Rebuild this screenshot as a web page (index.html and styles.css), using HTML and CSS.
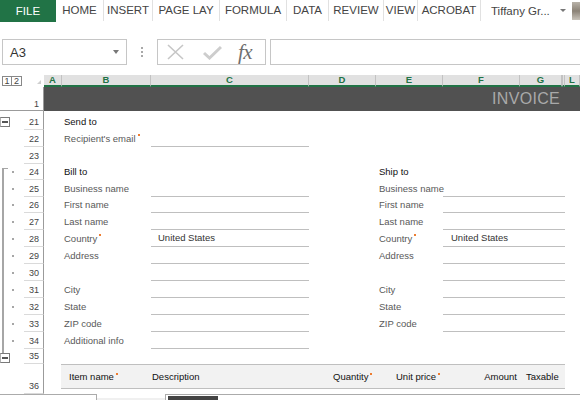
FILE: index.html
```html
<!DOCTYPE html>
<html>
<head>
    <meta charset="UTF-8">
    <link rel="stylesheet" href="styles.css">
</head>
<body>
    <div class="tabs">
        <div class="tab tab-file">FILE</div>
        <div class="tab w48">HOME</div>
        <div class="tab w49">INSERT</div>
        <div class="tab w67">PAGE LAY</div>
        <div class="tab w67">FORMULA</div>
        <div class="tab w42">DATA</div>
        <div class="tab w55">REVIEW</div>
        <div class="tab w34">VIEW</div>
        <div class="tab w63">ACROBAT</div>
        <div class="tab-user">
            <span>Tiffany Gr...</span>
            <span class="caret"></span>
            <span class="avatar"></span>
        </div>
    </div>

    <div class="fbar">
        <div class="namebox">
            <span>A3</span>
            <span class="caret"></span>
        </div>
        <div class="grip"><i></i><i></i><i></i></div>
        <div class="fbtns">
            <svg class="ico-x" width="17" height="16" viewBox="0 0 17 16">
                <path d="M1 1 L16 15 M16 1 L1 15" stroke="#c6c6c6" stroke-width="1.6" fill="none"/>
            </svg>
            <svg class="ico-ok" width="19" height="15" viewBox="0 0 19 15">
                <path d="M1 8 L6.5 13 L18 2" stroke="#cdcdcd" stroke-width="3" fill="none"/>
            </svg>
            <span class="fx">fx</span>
        </div>
        <div class="finput"></div>
    </div>

    <div class="sheet">
        <!-- column headers -->
        <div class="row colhdr">
            <div class="gutter levels"><span>1</span><span>2</span></div>
            <div class="corner"><span class="tri"></span></div>
            <div class="ch">A</div>
            <div class="ch">B</div>
            <div class="ch">C</div>
            <div class="ch">D</div>
            <div class="ch">E</div>
            <div class="ch">F</div>
            <div class="ch">G</div>
            <div class="ch hidden-col"></div>
            <div class="ch">L</div>
        </div>

        <div class="row r1">
            <div class="gutter"></div>
            <div class="rh">1</div>
            <div class="banner">INVOICE</div>
        </div>

        <div class="row h19">
            <div class="gutter"><span class="gut-box top6"><i></i></span></div>
            <div class="rh">21</div>
            <div></div>
            <div class="cell title">Send to</div>
        </div>

        <div class="row h17">
            <div class="gutter"></div>
            <div class="rh">22</div>
            <div></div>
            <div class="cell">Recipient's email<span class="req"></span></div>
            <div class="cell field"></div>
        </div>

        <div class="row h17">
            <div class="gutter"></div>
            <div class="rh">23</div>
        </div>

        <div class="row h16">
            <div class="gutter"><span class="gut-line start"></span><span class="gut-tick"></span><span class="gut-dot near"></span></div>
            <div class="rh">24</div>
            <div></div>
            <div class="cell title">Bill to</div>
            <div></div>
            <div></div>
            <div class="cell title ship">Ship to</div>
        </div>

        <div class="row h17">
            <div class="gutter"><span class="gut-line"></span><span class="gut-dot"></span></div>
            <div class="rh">25</div>
            <div></div>
            <div class="cell">Business name</div>
            <div class="cell field"></div>
            <div></div>
            <div class="cell ship">Business name</div>
            <div class="cell field ship-field"></div>
        </div>

        <div class="row h16">
            <div class="gutter"><span class="gut-line"></span><span class="gut-dot"></span></div>
            <div class="rh">26</div>
            <div></div>
            <div class="cell">First name</div>
            <div class="cell field"></div>
            <div></div>
            <div class="cell ship">First name</div>
            <div class="cell field ship-field"></div>
        </div>

        <div class="row h17">
            <div class="gutter"><span class="gut-line"></span><span class="gut-dot"></span></div>
            <div class="rh">27</div>
            <div></div>
            <div class="cell">Last name</div>
            <div class="cell field"></div>
            <div></div>
            <div class="cell ship">Last name</div>
            <div class="cell field ship-field"></div>
        </div>

        <div class="row h17">
            <div class="gutter"><span class="gut-line"></span><span class="gut-dot"></span></div>
            <div class="rh">28</div>
            <div></div>
            <div class="cell">Country<span class="req"></span></div>
            <div class="cell field value">United States</div>
            <div></div>
            <div class="cell ship">Country<span class="req"></span></div>
            <div class="cell field ship-field value">United States</div>
        </div>

        <div class="row h17">
            <div class="gutter"><span class="gut-line"></span><span class="gut-dot"></span></div>
            <div class="rh">29</div>
            <div></div>
            <div class="cell">Address</div>
            <div class="cell field"></div>
            <div></div>
            <div class="cell ship">Address</div>
            <div class="cell field ship-field"></div>
        </div>

        <div class="row h17">
            <div class="gutter"><span class="gut-line"></span><span class="gut-dot"></span></div>
            <div class="rh">30</div>
            <div></div>
            <div></div>
            <div class="cell field"></div>
            <div></div>
            <div></div>
            <div class="cell field ship-field"></div>
        </div>

        <div class="row h17">
            <div class="gutter"><span class="gut-line"></span><span class="gut-dot"></span></div>
            <div class="rh">31</div>
            <div></div>
            <div class="cell">City</div>
            <div class="cell field"></div>
            <div></div>
            <div class="cell ship">City</div>
            <div class="cell field ship-field"></div>
        </div>

        <div class="row h17">
            <div class="gutter"><span class="gut-line"></span><span class="gut-dot"></span></div>
            <div class="rh">32</div>
            <div></div>
            <div class="cell">State</div>
            <div class="cell field"></div>
            <div></div>
            <div class="cell ship">State</div>
            <div class="cell field ship-field"></div>
        </div>

        <div class="row h17">
            <div class="gutter"><span class="gut-line"></span><span class="gut-dot"></span></div>
            <div class="rh">33</div>
            <div></div>
            <div class="cell">ZIP code</div>
            <div class="cell field"></div>
            <div></div>
            <div class="cell ship">ZIP code</div>
            <div class="cell field ship-field"></div>
        </div>

        <div class="row h17">
            <div class="gutter"><span class="gut-line"></span><span class="gut-dot"></span></div>
            <div class="rh">34</div>
            <div></div>
            <div class="cell">Additional info</div>
            <div class="cell field"></div>
        </div>

        <div class="row h15">
            <div class="gutter col"><span class="gut-line stub"></span><span class="gut-box"><i></i></span></div>
            <div class="rh">35</div>
        </div>

        <div class="row h30">
            <div class="gutter"></div>
            <div class="rh">36</div>
            <div></div>
            <div class="items-head">
                <div class="ih ih-name">Item name<span class="req"></span></div>
                <div class="ih ih-desc">Description</div>
                <div class="ih ih-qty">Quantity<span class="req"></span></div>
                <div class="ih ih-price">Unit price<span class="req"></span></div>
                <div class="ih ih-amount">Amount</div>
                <div class="ih ih-tax">Taxable</div>
                <div></div>
            </div>
        </div>
    </div>

    <div class="sheetbar">
        <div class="sb-left"></div>
        <div class="sb-mid"></div>
        <div class="sb-right"><span class="thumb"></span></div>
    </div>
</body>
</html>
```

FILE: styles.css
```css
body {
    margin: 0;
    width: 580px;
    height: 400px;
    overflow: hidden;
    background: #fff;
    font-family: "Liberation Sans", Arial, sans-serif;
}

/* ribbon tabs */
.tabs {
    display: flex;
    height: 22px;
}

.tab {
    box-sizing: border-box;
    height: 21px;
    line-height: 21px;
    font-size: 11.5px;
    color: #444;
    text-align: center;
    white-space: nowrap;
    border-right: 1px solid #e1e1e1;
}

.tab-file {
    width: 56px;
    height: 22px;
    line-height: 22px;
    background: #217346;
    color: #fff;
    border-right: none;
}

.w34 { width: 34px; }
.w42 { width: 42px; }
.w48 { width: 48px; }
.w49 { width: 49px; }
.w55 { width: 55px; }
.w63 { width: 63px; }
.w67 { width: 67px; }

.tab-user {
    flex: 1;
    display: flex;
    align-items: center;
    height: 21px;
    padding-left: 10px;
    font-size: 11.5px;
    color: #444;
    white-space: nowrap;
}

.tab-user .caret {
    margin-left: 10px;
    border-top: 3px solid #777;
}

.avatar {
    width: 8px;
    height: 18px;
    margin-left: 6px;
    background: linear-gradient(180deg, #b8b2a8 0%, #8b8276 50%, #c9c3ba 100%);
}

.caret {
    width: 0;
    height: 0;
    border-left: 3px solid transparent;
    border-right: 3px solid transparent;
    border-top: 4px solid #777;
}

/* formula bar */
.fbar {
    display: flex;
    align-items: center;
    margin-top: 17px;
    height: 26px;
}

.namebox {
    box-sizing: border-box;
    width: 125px;
    height: 26px;
    margin-left: 2px;
    padding: 0 7px 0 7px;
    border: 1px solid #c6c6c6;
    display: flex;
    align-items: center;
    justify-content: space-between;
    font-size: 13px;
    color: #333;
}

.grip {
    width: 30px;
    display: flex;
    flex-direction: column;
    align-items: center;
    gap: 2px;
}

.grip i {
    width: 2px;
    height: 2px;
    background: #a8a8a8;
}

.fbtns {
    box-sizing: border-box;
    width: 109px;
    height: 26px;
    border: 1px solid #c6c6c6;
    display: flex;
    align-items: center;
}

.ico-x {
    margin-left: 9px;
}

.ico-ok {
    margin-left: 19px;
}

.fx {
    margin-left: 16px;
    font-family: "Liberation Serif", serif;
    font-style: italic;
    font-size: 21px;
    line-height: 22px;
    color: #6f6f6f;
    letter-spacing: -0.5px;
}

.finput {
    box-sizing: border-box;
    flex: 1;
    height: 26px;
    margin-left: 4px;
    border: 1px solid #c6c6c6;
    border-right: none;
}

/* sheet grid */
.sheet {
    margin-top: 10px;
}

.row {
    display: grid;
    grid-template-columns: 24px 20px 18px 89px 158px 67px 67px 77px 42px 3px 15px;
    font-size: 9.5px;
}

.h15 { height: 15px; }
.h16 { height: 16px; }
.h17 { height: 17px; }
.h19 { height: 19px; }
.h30 { height: 30px; }

.colhdr {
    height: 12px;
}

.levels {
    display: flex;
    padding: 1px 0 0 2px;
}

.levels span {
    box-sizing: border-box;
    width: 10px;
    height: 10px;
    border: 1px solid #888;
    font-size: 9px;
    line-height: 8px;
    text-align: center;
    color: #444;
}

.levels span + span {
    border-left: none;
}

.corner {
    display: flex;
    justify-content: flex-end;
    align-items: flex-end;
    padding: 0 3px 3px 0;
}

.tri {
    width: 0;
    height: 0;
    border-left: 4px solid transparent;
    border-bottom: 4px solid #cfcfcf;
}

.ch {
    box-sizing: border-box;
    background: #e1e1e1;
    border-right: 1px solid #c2c2c2;
    border-bottom: 2px solid #217346;
    text-align: center;
    font-size: 9.5px;
    font-weight: bold;
    line-height: 10px;
    color: #217346;
}

.hidden-col {
    border-left: 1px solid #c2c2c2;
}

.r1 {
    height: 23px;
    border-bottom: 1px solid #9b9b9b;
}

.banner {
    grid-column: 3 / -1;
    background: #515151;
    color: #a9a9a9;
    font-size: 16px;
    text-align: right;
    padding-right: 20px;
    line-height: 24px;
    letter-spacing: 0.3px;
}

/* row headers */
.rh {
    box-sizing: border-box;
    border-right: 1px solid #9b9b9b;
    border-bottom: 1px solid #dadada;
    display: flex;
    align-items: flex-end;
    justify-content: flex-end;
    padding: 0 4px 1px 0;
    font-size: 9px;
    line-height: 11px;
    color: #444;
}

.r1 .rh {
    border-bottom: none;
}

/* outline gutter */
.gutter {
    display: flex;
}

.gutter.col {
    flex-direction: column;
}

.gut-line {
    width: 2px;
    margin-left: 2px;
    background: #a6a6a6;
}

.gut-line.start {
    margin-top: 4px;
}

.gut-line.stub {
    height: 4px;
}

.gut-tick {
    width: 4px;
    height: 1px;
    margin-top: 4px;
    background: #a6a6a6;
}

.gut-dot {
    align-self: flex-end;
    width: 2px;
    height: 2px;
    margin: 0 0 7px 8px;
    background: #a6a6a6;
}

.gut-dot.near {
    margin-left: 4px;
}

.gut-box {
    box-sizing: border-box;
    width: 10px;
    height: 10px;
    border: 1px solid #7a7a7a;
    border-left-color: #b0b0b0;
    display: flex;
    align-items: center;
    justify-content: center;
}

.gut-box.top6 {
    margin-top: 6px;
}

.gut-box i {
    width: 6px;
    height: 2px;
    background: #555;
}

/* cells */
.cell {
    display: flex;
    align-items: flex-end;
    padding: 0 0 3px 2px;
    line-height: 11px;
    white-space: nowrap;
    color: #595959;
}

.cell.title {
    color: #111;
}

.cell.ship {
    grid-column: 7;
    padding-left: 3px;
}

.field {
    box-sizing: border-box;
    border-bottom: 1px solid #bfbfbf;
}

.ship-field {
    grid-column: 8 / 11;
}

.value {
    padding-left: 7px;
    color: #333;
}

.ship-field.value {
    padding-left: 8px;
}

.req {
    display: inline-block;
    align-self: flex-start;
    width: 2px;
    height: 2px;
    margin: 3px 0 0 2px;
    background: #ed7d31;
}

.cell .req {
    margin-top: 4px;
}

/* items table heading */
.items-head {
    box-sizing: border-box;
    grid-column: 4 / 11;
    height: 25px;
    display: grid;
    grid-template-columns: 89px 158px 67px 67px 77px 42px 3px;
    background: #f2f2f2;
    border-top: 1px solid #bfbfbf;
    border-bottom: 1px solid #bfbfbf;
    margin-left: -1px;
}

.ih {
    display: flex;
    align-items: center;
    white-space: nowrap;
    color: #111;
    line-height: 11px;
}

.ih .req {
    align-self: center;
    margin: -6px 0 0 2px;
}

.ih-name { padding-left: 8px; }
.ih-desc { padding-left: 2px; }
.ih-qty { padding-left: 25px; }
.ih-price { padding-left: 21px; }
.ih-amount { justify-content: flex-end; padding-right: 2px; }
.ih-tax { padding-left: 7px; }

/* bottom sheet bar */
.sheetbar {
    display: flex;
    height: 7px;
}

.sb-left {
    box-sizing: border-box;
    width: 97px;
    border-top: 1px solid #ababab;
    border-right: 1px solid #ababab;
}

.sb-mid {
    width: 68px;
    margin-top: 4px;
    background: #f0f0f0;
}

.sb-right {
    box-sizing: border-box;
    flex: 1;
    border-top: 1px solid #ababab;
    border-left: 1px solid #ababab;
    padding: 1px 0 0 2px;
}

.thumb {
    display: block;
    width: 50px;
    height: 6px;
    background: #444;
}
```
